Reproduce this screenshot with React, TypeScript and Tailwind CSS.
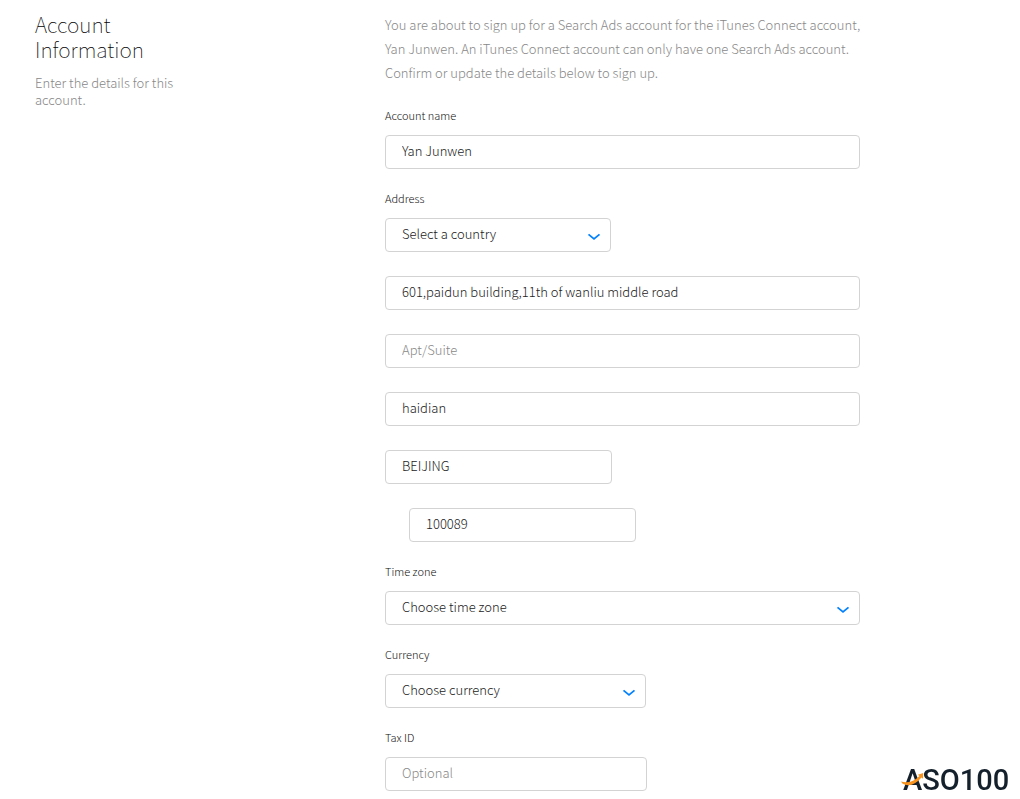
import React from 'react';

type FieldProps = {
  id: string;
  value?: string;
  placeholder?: string;
  label: string;
  className?: string;
};

const box =
  'block h-[34px] rounded-[4px] border border-[#d3d3d3] bg-white px-4 text-[13px] leading-5 text-[#222] placeholder:text-[#888] placeholder:opacity-100 outline-none focus:border-[#0080ff]';

function Label({ htmlFor, children }: { htmlFor: string; children: React.ReactNode }) {
  return (
    <label htmlFor={htmlFor} className="mb-3 block text-[11px] leading-4 text-[#111]">
      {children}
    </label>
  );
}

function TextField({ id, value, placeholder, label, className = 'w-full' }: FieldProps) {
  return (
    <input
      id={id}
      type="text"
      aria-label={label}
      defaultValue={value}
      placeholder={placeholder}
      className={`${box} pb-1 ${className}`}
    />
  );
}

function SelectField({ id, label, value, className = 'w-full' }: FieldProps) {
  return (
    <div className={`relative ${className}`}>
      <select id={id} aria-label={label} className={`${box} w-full appearance-none pb-[2px]`}>
        <option>{value}</option>
      </select>
      <svg
        viewBox="0 0 14 10"
        className="pointer-events-none absolute top-[14px] right-[10px] h-[10px] w-[14px]"
        fill="none"
        stroke="#0080ff"
        strokeWidth="1.7"
      >
        <path d="M1.500 2.300 7 6.900l5.500-4.600" />
      </svg>
    </div>
  );
}

function Logo() {
  return (
    <svg
      viewBox="0 0 116 34"
      className="fixed right-[3px] bottom-[3px] h-[34px] w-[116px]"
      role="img"
      aria-label="ASO100"
    >
      <text x="2" y="28" fontSize="29" fontWeight="500" fill="#14202b" className="font-['Roboto',sans-serif]">
        ASO100
      </text>
      <path
        d="M0 19.500Q10 22.500 18.500 14l-1.600-1.200 5.300-1.800-.2 5.800-1.500-1.200Q12 25.500 3.500 22.600Q1 21.800 0 19.500Z"
        fill="#f7931e"
      />
    </svg>
  );
}

export default function App() {
  return (
    <div className="flex min-h-screen bg-white px-[35px] pb-2 font-['Noto_Sans_CJK_SC','Open_Sans',sans-serif] font-light">
      <aside className="w-[350px] shrink-0 pt-3">
        <h1 className="w-[140px] text-[21px] leading-[25px] font-thin text-black">Account Information</h1>
        <p className="mt-3 w-[150px] text-[13px] leading-[17px] text-[#888]">
          Enter the details for this account.
        </p>
      </aside>

      <main className="max-w-[475px] min-w-0 flex-1 pt-[13px]">
        <p className="text-[13px] leading-6 whitespace-nowrap text-[#888]">
          You are about to sign up for a Search Ads account for the iTunes Connect account,
          <br />
          Yan Junwen. An iTunes Connect account can only have one Search Ads account.
          <br />
          Confirm or update the details below to sign up.
        </p>

        <form className="mt-[22px] space-y-[21px]">
          <div>
            <Label htmlFor="account-name">Account name</Label>
            <TextField id="account-name" label="Account name" value="Yan Junwen" />
          </div>

          <div>
            <Label htmlFor="country">Address</Label>
            <div className="space-y-6">
              <SelectField id="country" label="Country" value="Select a country" className="w-[226px]" />
              <TextField id="street" label="Street" value="601,paidun building,11th of wanliu middle road" />
              <TextField id="apt" label="Apt/Suite" placeholder="Apt/Suite" />
              <TextField id="city" label="City" value="haidian" />
              <TextField id="state" label="State" value="BEIJING" className="w-[227px]" />
              <TextField id="zip" label="Postal code" value="100089" className="ml-6 w-[227px]" />
            </div>
          </div>

          <div>
            <Label htmlFor="time-zone">Time zone</Label>
            <SelectField id="time-zone" label="Time zone" value="Choose time zone" />
          </div>

          <div>
            <Label htmlFor="currency">Currency</Label>
            <SelectField id="currency" label="Currency" value="Choose currency" className="w-[261px]" />
          </div>

          <div>
            <Label htmlFor="tax-id">Tax ID</Label>
            <TextField id="tax-id" label="Tax ID" placeholder="Optional" className="w-[262px]" />
          </div>
        </form>
      </main>

      <Logo />
    </div>
  );
}
